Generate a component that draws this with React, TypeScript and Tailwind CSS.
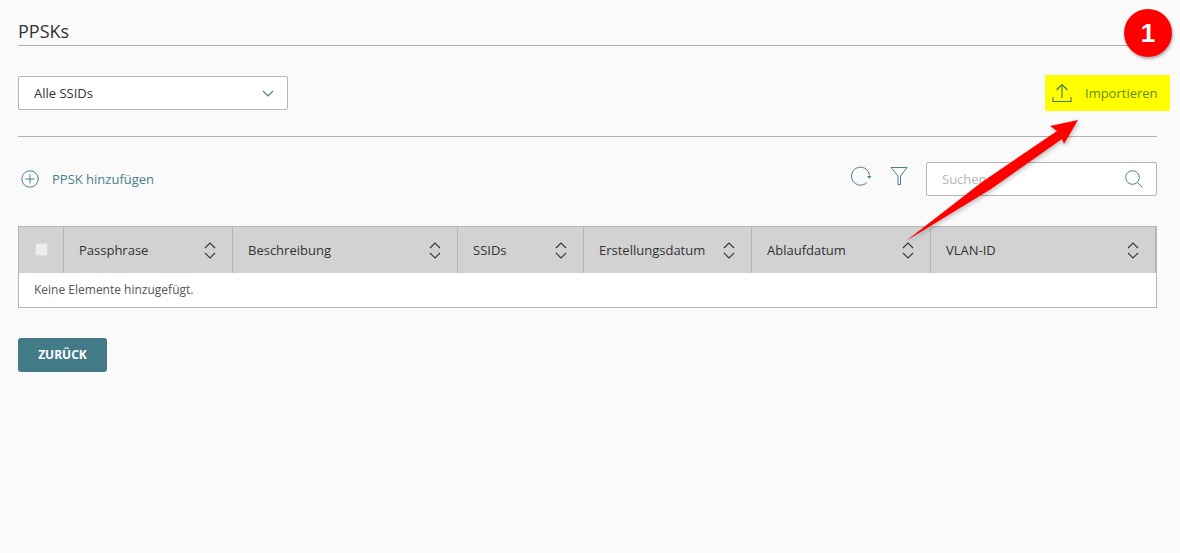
import React from 'react';

const teal = '#4a7f8c';

const SortIcon = () => (
  <svg width="12" height="17" viewBox="0 0 12 17" fill="none" stroke="#333" strokeWidth="1.1" className="shrink-0">
    <path d="M1 6 6 1l5 5" />
    <path d="M1 11l5 5 5-5" />
  </svg>
);

const columns = [
  { label: 'Passphrase', w: 'w-[169px]', pr: 'pr-[16px]' },
  { label: 'Beschreibung', w: 'w-[225px]', pr: 'pr-[16px]' },
  { label: 'SSIDs', w: 'w-[126px]', pr: 'pr-[16px]' },
  { label: 'Erstellungsdatum', w: 'w-[168px]', pr: 'pr-[16px]' },
  { label: 'Ablaufdatum', w: 'w-[179px]', pr: 'pr-[16px]' },
  { label: 'VLAN-ID', w: 'w-[226px]', pr: 'pr-[18px]' },
];

export default function App() {
  return (
    <div className="relative h-[553px] w-[1180px] overflow-hidden bg-[#fafafa] font-['Open_Sans',sans-serif] text-[13px] text-[#333]">
      <div className="pl-[18px] pr-[23px] pt-[18px]">
        {/* Title */}
        <div className="h-[28px] border-b border-[#b0b0b0] text-[18px] leading-[27px] text-[#333]">PPSKs</div>

        {/* SSID filter and import */}
        <div className="mt-[28px] flex h-[38px] items-center justify-between">
          <div className="flex h-[34px] w-[270px] items-center justify-between rounded-[2px] border border-[#b5b5b5] bg-white pl-[15px] pr-[13px]">
            <span className="pt-px">Alle SSIDs</span>
            <svg width="12" height="7" viewBox="0 0 12 7" fill="none" stroke={teal} strokeWidth="1.2">
              <path d="M1 1l5 5 5-5" />
            </svg>
          </div>
          <div className="mr-[-13px] flex h-[36px] w-[125px] items-center bg-[#ffff00] pl-[7px]">
            <svg width="20" height="20" viewBox="0 0 20 20" fill="none" stroke="#3f7460" strokeWidth="1.1" className="shrink-0">
              <path d="M10 15V2M4.5 7 10 1.5 15.5 7" />
              <path d="M1 14v4.5h18V14" />
            </svg>
            <span className="ml-[13px] pt-px text-[#5f8f0a]">Importieren</span>
          </div>
        </div>

        <div className="mt-[24px] h-px bg-[#b0b0b0]" />

        {/* Toolbar */}
        <div className="mt-[25px] flex h-[34px] items-center justify-between">
          <div className="flex items-center pl-[3px]">
            <svg width="18" height="18" viewBox="0 0 18 18" fill="none" stroke={teal} strokeWidth="1">
              <circle cx="9" cy="9" r="8.2" />
              <path d="M9 4.5v9M4.5 9h9" />
            </svg>
            <span className="ml-[13px] pt-px text-[#4a7f8c]">PPSK hinzufügen</span>
          </div>
          <div className="flex items-center">
            <svg width="22" height="20" viewBox="0 0 22 20" fill="none" stroke={teal} strokeWidth="1" className="mb-[6px] mr-[1px]">
              <path d="M19.5 9.5a9 9 0 1 0-2.6 7" />
              <path d="M17 10h4.5l-2.2 2.8z" fill={teal} stroke="none" />
            </svg>
            <svg width="18" height="20" viewBox="0 0 18 20" fill="none" stroke={teal} strokeWidth="1" className="mb-[7px] ml-[17px]">
              <path d="M1 1.5h16L10.5 10v8.5H8V10z" />
            </svg>
            <div className="ml-[18px] flex h-[34px] w-[231px] items-center justify-between rounded-[2px] border border-[#b5b5b5] bg-white pl-[15px] pr-[13px]">
              <span className="pt-px text-[#b5b5b5]">Suchen</span>
              <svg width="18" height="18" viewBox="0 0 18 18" fill="none" stroke={teal} strokeWidth="1">
                <circle cx="7.5" cy="7.5" r="6.8" />
                <path d="M12.5 12.5l5 5" />
              </svg>
            </div>
          </div>
        </div>

        {/* Table */}
        <div className="mt-[30px] border border-[#b5b5b5] bg-white">
          <div className="mr-[-1px] flex h-[46px] border-r-2 border-[#b5b5b5] bg-[#d2d2d2]">
            <div className="flex w-[45px] shrink-0 justify-center border-r border-[#b5b5b5] pt-[16px]">
              <div className="h-[13px] w-[13px] rounded-[2px] border border-[#dcdcdc] bg-[#ececec]" />
            </div>
            {columns.map((c, i) => (
              <div
                key={c.label}
                className={`flex shrink-0 items-center justify-between pl-[15px] ${c.pr} ${c.w} ${i < columns.length - 1 ? 'border-r border-[#b5b5b5]' : ''}`}
              >
                <span className="whitespace-nowrap pt-px">{c.label}</span>
                <SortIcon />
              </div>
            ))}
          </div>
          <div className="flex h-[34px] items-center pl-[15px] text-[12px] text-[#555]">Keine Elemente hinzugefügt.</div>
        </div>

        <button className="mt-[30px] flex h-[34px] w-[89px] items-center justify-center rounded-[3px] bg-[#437a88] text-[12px] font-bold text-white">
          ZURÜCK
        </button>
      </div>

      {/* Annotation overlay */}
      <svg width="1180" height="553" viewBox="0 0 1180 553" className="pointer-events-none absolute left-0 top-0 drop-shadow-[1px_2px_2px_rgba(0,0,0,0.25)]">
        <polygon points="906,241 982,182 1057,131 1050,126 1078,120 1064,144 1062,139 991,189" fill="#ff0000" />
      </svg>
      <div className="absolute left-[1124px] top-[9px] flex h-[48px] w-[48px] items-center justify-center rounded-full bg-[#ff0000] font-['Liberation_Sans',sans-serif] text-[26px] font-bold text-white shadow-[1px_2px_3px_rgba(0,0,0,0.3)]">
        1
      </div>
    </div>
  );
}
